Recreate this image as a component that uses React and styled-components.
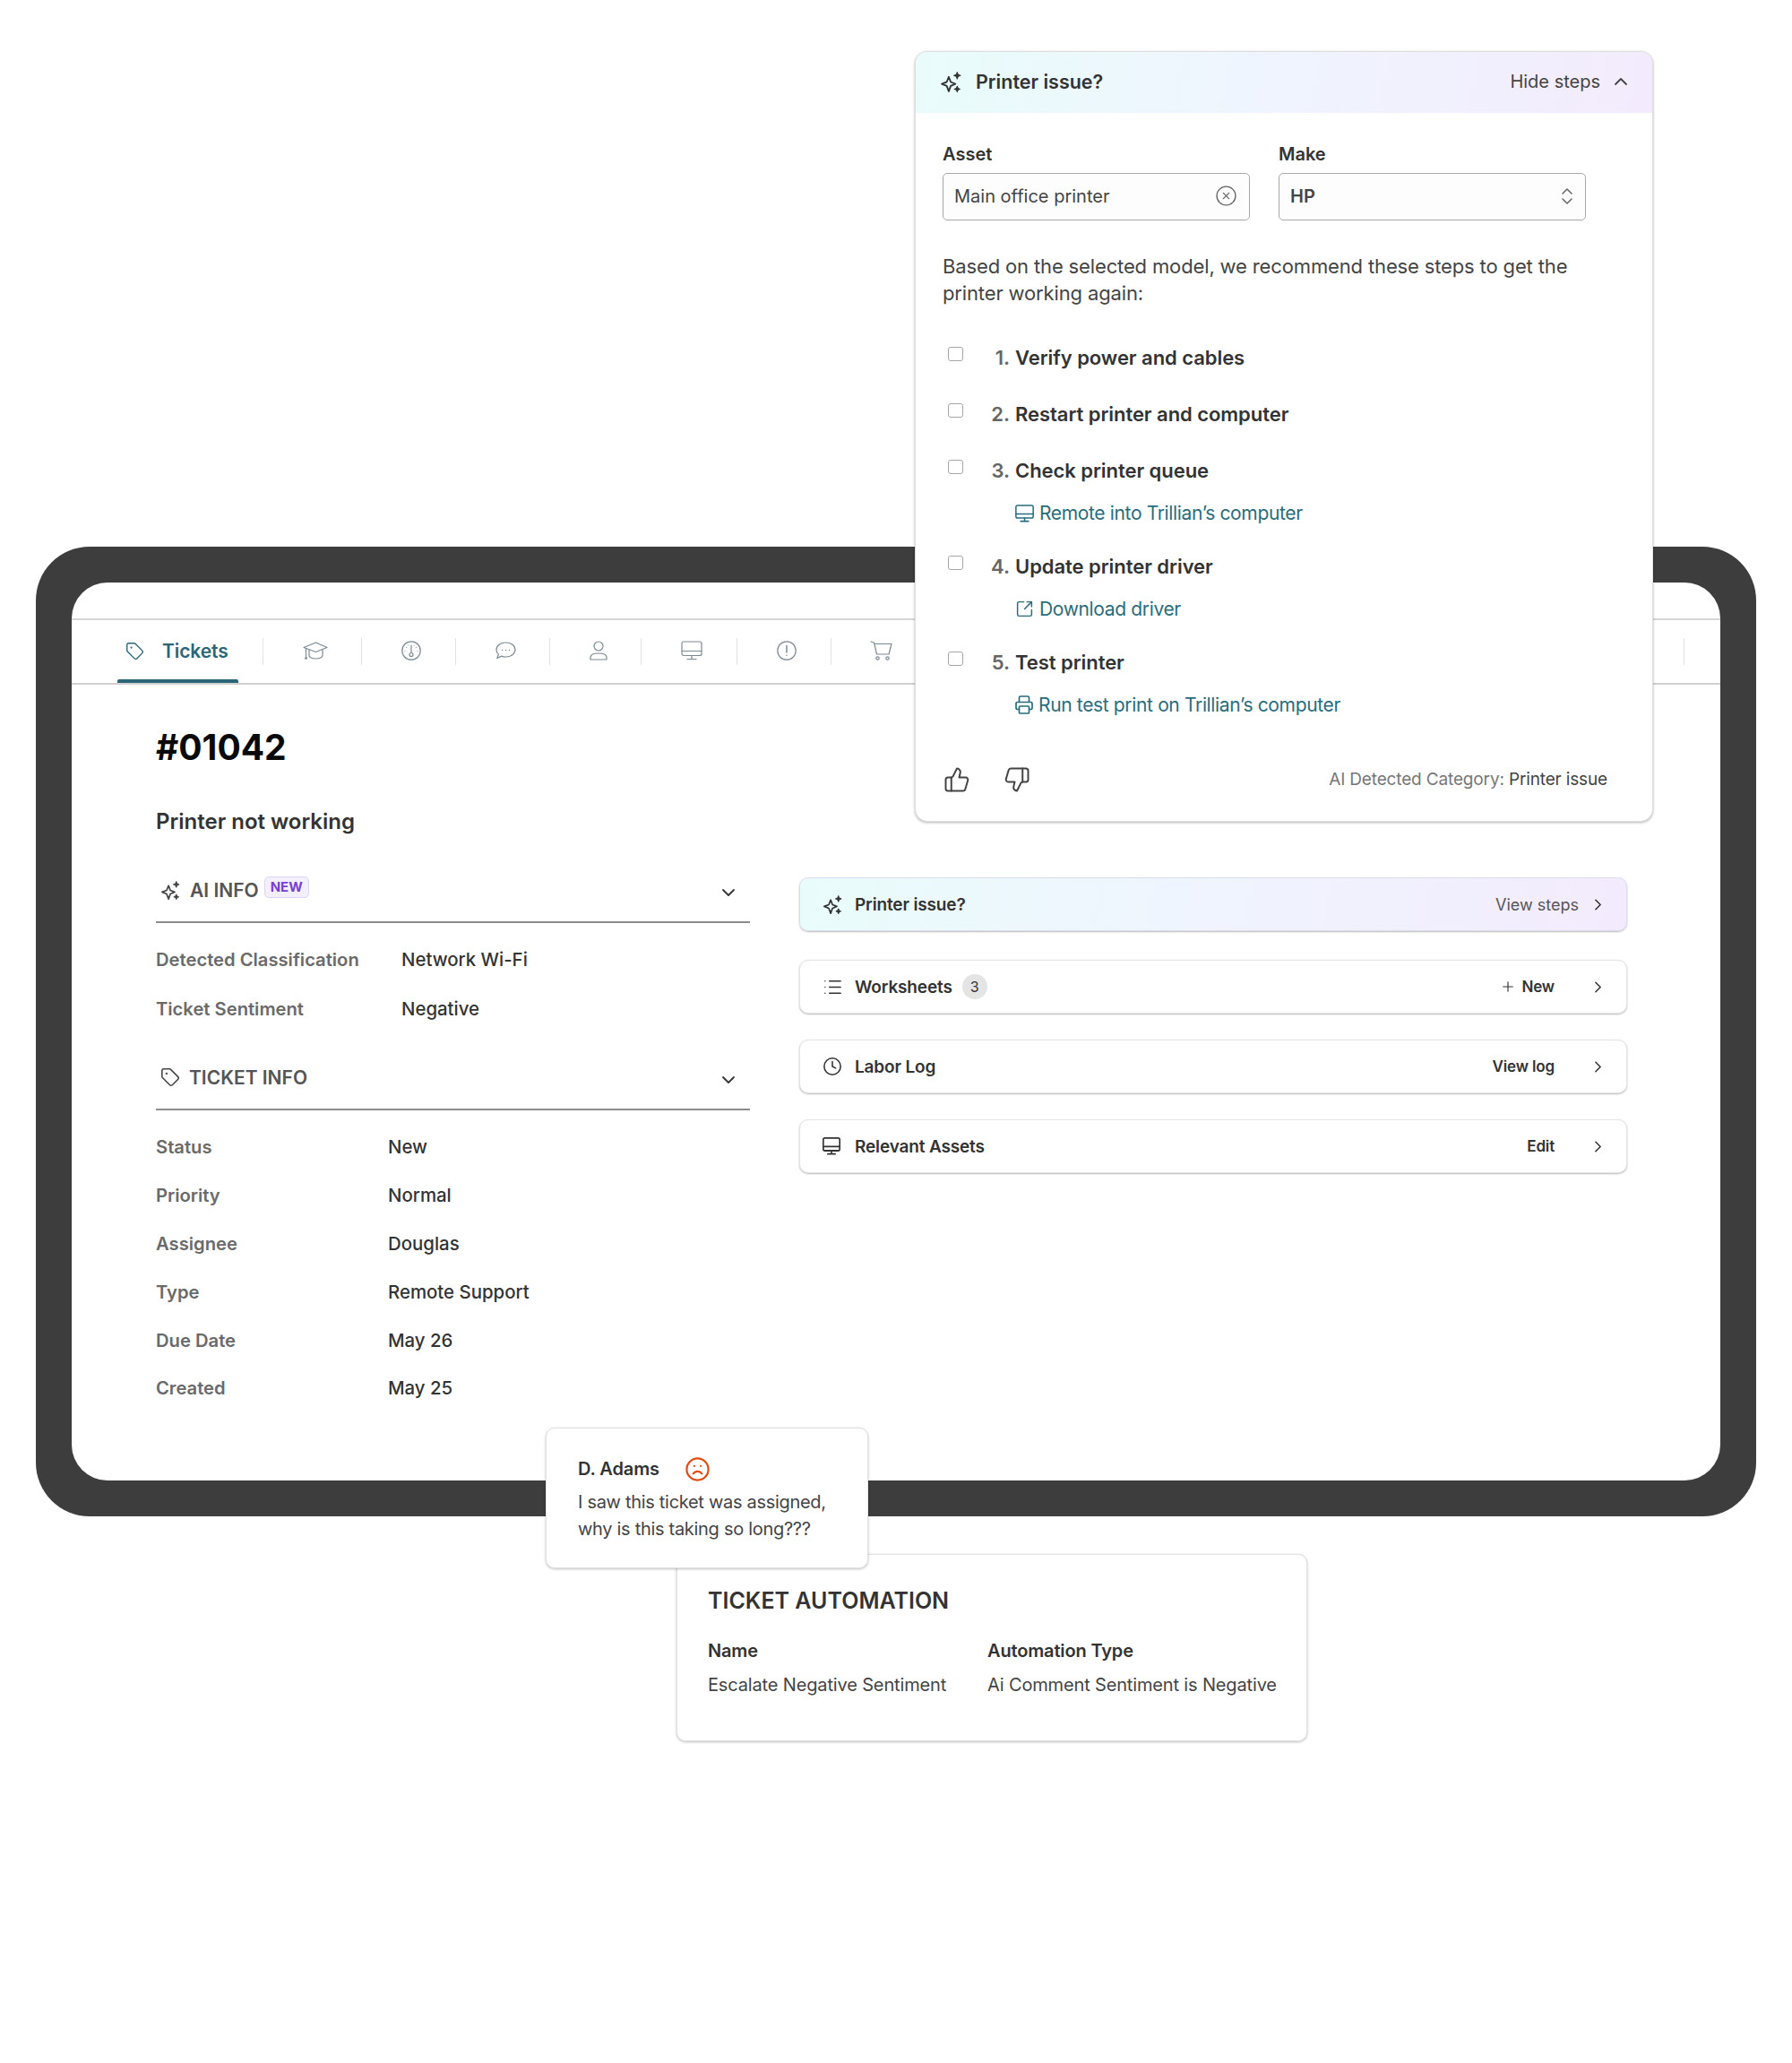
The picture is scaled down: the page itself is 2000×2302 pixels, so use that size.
import { Fragment } from "react";
import styled, { createGlobalStyle } from "styled-components";
import {
  ChevronDown,
  ChevronRight,
  ChevronUp,
  ChevronsUpDown,
  CircleX,
  Clock,
  Frown,
  List,
  Plus,
  SquareArrowOutUpRight,
  Tag,
  ThumbsDown,
  ThumbsUp,
} from "lucide-react";

const GlobalStyle = createGlobalStyle`
  html, body { margin: 0; padding: 0; background: #fff; }
  body { font-family: Inter, "Liberation Sans", sans-serif; color: #333; }
  * { box-sizing: border-box; }
`;

const Sparkle = ({ size = 24 }) => (
  <svg width={size} height={size} viewBox="0 0 24 24" fill="none" stroke="currentColor" strokeWidth="1.8" strokeLinejoin="round">
    <path d="M9.5 6.5 11.6 12l5 2-5 2.2L9.5 22l-2.2-5.8L2 14l5.3-2z" />
    <path d="M18.5 1.5l1 2.6 2.5 1-2.5 1-1 2.6-1-2.6-2.5-1 2.5-1z" fill="currentColor" strokeWidth="1" />
    <path d="M18.5 16.5l.9 2.2 2.1.9-2.1.9-.9 2.2-.9-2.2-2.1-.9 2.1-.9z" fill="currentColor" strokeWidth="1" />
  </svg>
);

const LineIcon = ({ w, h, sw = 1.2, children }) => (
  <svg width={w} height={h} viewBox={`0 0 ${w} ${h}`} fill="none" stroke="currentColor" strokeWidth={sw} strokeLinecap="round" strokeLinejoin="round">
    {children}
  </svg>
);

const CapIcon = () => (
  <LineIcon w={28} h={20}>
    <path d="M1 6.5 14.5 1 27 6.5 14.5 11.5z" />
    <path d="M7 9v6.5c0 2 3.5 3.5 7.5 3.5s7.5-1.5 7.5-3.5V9" />
    <path d="M3.5 7.5v9.500M2.500 19l1-2 1 2z" />
  </LineIcon>
);

const GaugeIcon = () => (
  <LineIcon w={22} h={22}>
    <circle cx="11" cy="11" r="10.2" />
    <circle cx="11" cy="15.5" r="2" />
    <path d="M11 5v8.5M5.5 7.5h.01M16.5 7.5h.01M4 11.5h.01M18 11.5h.01M7.7 5h.01M14.3 5h.01" />
  </LineIcon>
);

const ChatIcon = () => (
  <LineIcon w={23} h={20}>
    <path d="M11.5 1c5.8 0 10.5 3.5 10.5 8s-4.7 8-10.5 8c-1.7 0-3.3-.3-4.700-.9L1.800 18.500l1.600-4.200C1.900 12.900 1 11 1 9c0-4.500 4.700-8 10.500-8z" />
    <path d="M7.5 9.5h.01M11.5 9.5h.01M15.5 9.5h.01" strokeWidth="1.5" />
  </LineIcon>
);

const UserIcon = () => (
  <LineIcon w={20} h={22}>
    <circle cx="10" cy="6" r="5" />
    <path d="M1 21v-2.5C1 15.5 5 14 10 14s9 1.5 9 4.5V21z" />
  </LineIcon>
);

const ScreenIcon = ({ w = 24, h = 22, sw = 1.2 }) => (
  <svg width={w} height={h} viewBox="0 0 24 22" preserveAspectRatio="none" fill="none" stroke="currentColor" strokeWidth={sw} strokeLinecap="round" strokeLinejoin="round">
    <rect x="1" y="1" width="22" height="15.5" rx="2" />
    <path d="M1 11.5h22M12 16.5v4M7 20.5h10" />
  </svg>
);

const AlertIcon = () => (
  <LineIcon w={22} h={22}>
    <circle cx="11" cy="11" r="10.2" />
    <path d="M11 5.5v7.5M11 16.2h.01" strokeWidth="1.5" />
  </LineIcon>
);

const CartIcon = () => (
  <LineIcon w={25} h={22}>
    <path d="M1 1l3.5 1 3 13h13.5L24 3.5H5" />
    <circle cx="8.5" cy="19.5" r="1.7" />
    <circle cx="19.5" cy="19.5" r="1.7" />
  </LineIcon>
);

const PrinterIcon = () => (
  <svg width="20" height="21" viewBox="0 0 20 21" fill="none" stroke="currentColor" strokeWidth="1.7" strokeLinejoin="round">
    <path d="M4.5 7.5V2.5A1.5 1.5 0 0 1 6 1h8a1.5 1.5 0 0 1 1.5 1.5v5" />
    <path d="M4.5 15.5h-2A1.5 1.5 0 0 1 1 14V9a1.5 1.5 0 0 1 1.5-1.5h15A1.5 1.5 0 0 1 19 9v5a1.5 1.5 0 0 1-1.5 1.5h-2" />
    <rect x="4.5" y="12" width="11" height="8" rx="1" />
  </svg>
);

const Canvas = styled.div`
  position: relative;
  width: 2000px;
  height: 2302px;
  padding: 610px 40px 0;
  overflow: hidden;
`;

const Device = styled.div`
  width: 1920px;
  height: 1082px;
  padding: 40px;
  background: #3d3d3d;
  border-radius: 60px;
`;

const Screen = styled.div`
  height: 1002px;
  padding-top: 40px;
  background: #fff;
  border-radius: 40px;
`;

const TabBar = styled.div`
  display: flex;
  align-items: center;
  height: 74px;
  padding-left: 51px;
  padding-right: 40px;
  border-top: 2px solid #d6d6d6;
  border-bottom: 2px solid #d0d0d0;
`;

const ActiveTab = styled.div`
  position: relative;
  display: flex;
  flex: none;
  align-items: center;
  gap: 20px;
  width: 135px;
  height: 70px;
  padding: 0 0 2px 9px;
  font-size: 21px;
  font-weight: 600;
  letter-spacing: -0.1px;
  color: #2a6677;
  &::after {
    content: "";
    position: absolute;
    left: 0;
    right: 0;
    bottom: 0;
    height: 4px;
    border-radius: 2px 2px 0 0;
    background: #2a6677;
  }
`;

const Sep = styled.span`
  flex: none;
  width: 1px;
  height: 30px;
  background: #e2e2e2;
  margin-left: ${(p) => (p.$left === "auto" ? "auto" : `${p.$left || 0}px`)};
`;

const IconTab = styled.div`
  display: flex;
  flex: none;
  align-items: center;
  justify-content: center;
  width: ${(p) => p.$width}px;
  padding: 0 0 2px 6px;
  color: #7a8a94;
`;

const Content = styled.div`
  padding: 46px 104px 0 94px;
`;

const TicketId = styled.h1`
  margin: 0;
  font-size: 39px;
  line-height: 48px;
  font-weight: 700;
  color: #0a0a0a;
`;

const Subject = styled.h2`
  margin: 43px 0 0;
  font-size: 24px;
  line-height: 32px;
  font-weight: 600;
  color: #333;
`;

const Columns = styled.div`
  display: grid;
  grid-template-columns: 663px 924px;
  gap: 55px;
  margin-top: 26px;
`;

const SectionHead = styled.div`
  display: flex;
  align-items: center;
  height: 71px;
  padding: 20px 12px 21px 5px;
  border-bottom: 2px solid #8c8c8c;
  margin-top: ${(p) => p.$top || 0}px;
  color: #444;
`;

const SectionTitle = styled.span`
  margin-left: 10px;
  font-size: 21px;
  font-weight: 600;
  color: #555;
`;

const NewBadge = styled.span`
  align-self: flex-start;
  margin: -1px 0 0 6px;
  padding: 1px 6px;
  font-size: 15px;
  line-height: 20px;
  font-weight: 700;
  color: #7a3fd0;
  background: #f3effd;
  border: 1px solid #ddd5f5;
  border-radius: 5px;
`;

const Chevron = styled.span`
  display: flex;
  margin: 6px 0 0 auto;
  color: #333;
`;

const InfoList = styled.div`
  padding-top: ${(p) => p.$top}px;
`;

const InfoRow = styled.div`
  display: grid;
  grid-template-columns: ${(p) => p.$label}px 1fr;
  align-items: center;
  height: ${(p) => p.$height}px;
`;

const InfoLabel = styled.span`
  font-size: 20.2px;
  font-weight: 600;
  color: #6a6a6a;
`;

const InfoValue = styled.span`
  font-size: 20.4px;
  font-weight: 500;
  color: #333;
`;

const Panels = styled.div`
  display: flex;
  flex-direction: column;
  gap: 29px;
  padding-top: 20px;
`;

const Panel = styled.div`
  display: flex;
  align-items: center;
  height: 60px;
  margin-bottom: ${(p) => (p.$ai ? 3 : 0)}px;
  padding: 0 21px 0 25px;
  border: 1.5px solid ${(p) => (p.$ai ? "#dcdcf0" : "#e4e4e4")};
  border-radius: 10px;
  background: ${(p) =>
    p.$ai ? "linear-gradient(100deg, #e9fcfb 0%, #eff5fe 45%, #f3ebfd 100%)" : "#fff"};
  box-shadow: 0 1px 2px rgba(0, 0, 0, 0.28);
  color: #333;
`;

const PanelIcon = styled.span`
  display: flex;
  flex: none;
  justify-content: flex-start;
  width: 23px;
`;

const PanelTitle = styled.span`
  margin-left: 13px;
  font-size: 19px;
  font-weight: 600;
  letter-spacing: -0.15px;
  color: #333;
`;

const CountBadge = styled.span`
  display: flex;
  align-items: center;
  justify-content: center;
  width: 28px;
  height: 28px;
  margin-left: 11px;
  border-radius: 14px;
  background: #e4e4e4;
  font-size: 16px;
  color: #333;
`;

const PanelAction = styled.span`
  display: flex;
  align-items: center;
  gap: 6px;
  margin-left: auto;
  font-size: ${(p) => (p.$light ? 18 : 17)}px;
  font-weight: ${(p) => (p.$light ? 400 : 600)};
  letter-spacing: ${(p) => (p.$light ? 0 : -0.15)}px;
  color: ${(p) => (p.$light ? "#555" : "#333")};
`;

const PanelChevron = styled.span`
  display: flex;
  margin-left: ${(p) => p.$gap}px;
`;

const Popover = styled.div`
  position: absolute;
  left: 1021px;
  top: 57px;
  width: 824px;
  height: 860px;
  background: #fff;
  border: 1.5px solid #dedede;
  border-radius: 14px;
  box-shadow: 0 1px 3px rgba(0, 0, 0, 0.3);
  overflow: hidden;
`;

const PopHead = styled.div`
  display: flex;
  align-items: center;
  height: 68px;
  padding: 0 23px 2px 27px;
  background: linear-gradient(100deg, #e9fcfb 0%, #eff5fe 45%, #f3ebfd 100%);
`;

const PopTitle = styled.span`
  margin-left: 15px;
  font-size: 21.5px;
  font-weight: 600;
  color: #333;
`;

const PopToggle = styled.span`
  display: flex;
  align-items: center;
  gap: 11px;
  margin-left: auto;
  font-size: 20px;
  color: #444;
`;

const PopBody = styled.div`
  padding: 33px 30px 0;
`;

const Fields = styled.div`
  display: flex;
  gap: 32px;
`;

const Field = styled.div`
  width: 343px;
`;

const FieldLabel = styled.div`
  font-size: 20px;
  line-height: 26px;
  font-weight: 600;
  color: #333;
`;

const FieldBox = styled.div`
  display: flex;
  align-items: center;
  justify-content: space-between;
  height: 53px;
  margin-top: 8px;
  padding: 0 ${(p) => (p.$strong ? 8 : 13)}px 2px 12px;
  border: 1.5px solid #a8a8a8;
  border-radius: 5px;
  background: #fdfdfd;
  font-size: 20px;
  font-weight: ${(p) => (p.$strong ? 600 : 400)};
  color: #444;
`;

const Intro = styled.p`
  margin: 37px 0 0;
  font-size: 22px;
  line-height: 29.5px;
  letter-spacing: -0.14px;
  color: #444;
`;

const Steps = styled.div`
  margin-top: 25.5px;
`;

const Step = styled.div`
  display: flex;
  align-items: center;
  height: 63px;
`;

const CheckBox = styled.span`
  flex: none;
  width: 17px;
  height: 16px;
  margin: -8px 0 0 6px;
  border: 1.5px solid #a6a6a6;
  border-radius: 3px;
  background: #fff;
`;

const StepNum = styled.span`
  flex: none;
  width: 58px;
  text-align: right;
  padding-right: 6px;
  font-size: 22px;
  font-weight: 600;
  color: #666;
`;

const StepName = styled.span`
  font-size: 22px;
  font-weight: 600;
  letter-spacing: -0.05px;
  color: #333;
`;

const StepLink = styled.a`
  display: flex;
  align-items: center;
  gap: 6px;
  height: 44px;
  margin: -6px 0 6px;
  padding-left: 81px;
  font-size: 21px;
  letter-spacing: -0.35px;
  color: #2a6c7c;
`;

const PopFoot = styled.div`
  display: flex;
  align-items: center;
  gap: 37px;
  margin-top: 46px;
  padding-left: 1px;
  color: #444;
`;

const Category = styled.span`
  margin-left: auto;
  padding-right: 20px;
  font-size: 19px;
  letter-spacing: -0.15px;
  color: #777;
  b {
    font-weight: 400;
    color: #444;
  }
`;

const CommentCard = styled.div`
  position: absolute;
  z-index: 2;
  left: 609px;
  top: 1593px;
  width: 360px;
  height: 157px;
  padding: 31px 0 0 35px;
  background: #fff;
  border: 1.5px solid #e2e2e2;
  border-radius: 10px;
  box-shadow: 0 1px 3px rgba(0, 0, 0, 0.25);
`;

const CommentHead = styled.div`
  display: flex;
  align-items: center;
  gap: 28px;
  height: 28px;
  font-size: 20px;
  font-weight: 600;
  letter-spacing: -0.1px;
  color: #333;
  svg {
    color: #e14a10;
  }
`;

const CommentText = styled.p`
  margin: 8px 0 0;
  font-size: 20px;
  line-height: 30px;
  letter-spacing: -0.3px;
  white-space: nowrap;
  color: #444;
`;

const AutomationCard = styled.div`
  position: absolute;
  z-index: 1;
  left: 755px;
  top: 1734px;
  width: 704px;
  height: 209px;
  padding: 33px 0 0 34px;
  background: #fff;
  border: 1.5px solid #e2e2e2;
  border-radius: 10px;
  box-shadow: 0 1px 3px rgba(0, 0, 0, 0.25);
`;

const AutomationTitle = styled.div`
  font-size: 25px;
  line-height: 36px;
  font-weight: 600;
  color: #333;
`;

const AutomationGrid = styled.div`
  display: grid;
  grid-template-columns: 312px 1fr;
  row-gap: 10px;
  margin-top: 24px;
  font-size: 20px;
  line-height: 28px;
  letter-spacing: -0.15px;
  white-space: nowrap;
  color: #444;
`;

const AutomationHead = styled.span`
  font-weight: 600;
  color: #333;
`;

const ticketInfo = [
  ["Status", "New"],
  ["Priority", "Normal"],
  ["Assignee", "Douglas"],
  ["Type", "Remote Support"],
  ["Due Date", "May 26"],
  ["Created", "May 25"],
];

const steps = [
  { num: "1.", name: "Verify power and cables" },
  { num: "2.", name: "Restart printer and computer" },
  { num: "3.", name: "Check printer queue", link: "Remote into Trillian’s computer", icon: <ScreenIcon w={21} h={20} sw={1.7} /> },
  { num: "4.", name: "Update printer driver", link: "Download driver", icon: <SquareArrowOutUpRight size={21} strokeWidth={1.7} /> },
  { num: "5.", name: "Test printer", link: "Run test print on Trillian’s computer", icon: <PrinterIcon /> },
];

const tabIcons = [
  { icon: <CapIcon />, width: 109 },
  { icon: <GaugeIcon />, width: 104 },
  { icon: <ChatIcon />, width: 104 },
  { icon: <UserIcon />, width: 101 },
  { icon: <ScreenIcon />, width: 106 },
  { icon: <AlertIcon />, width: 104 },
  { icon: <CartIcon />, width: 104 },
];

export default function App() {
  return (
    <Canvas>
      <GlobalStyle />
      <Device>
        <Screen>
          <TabBar>
            <ActiveTab>
              <Tag size={21} strokeWidth={1.6} />
              Tickets
            </ActiveTab>
            <Sep $left={27} />
            {tabIcons.map(({ icon, width }, i) => (
              <Fragment key={i}>
                <IconTab $width={width}>{icon}</IconTab>
                <Sep />
              </Fragment>
            ))}
            <Sep $left="auto" />
          </TabBar>
          <Content>
            <TicketId>#01042</TicketId>
            <Subject>Printer not working</Subject>
            <Columns>
              <div>
                <SectionHead>
                  <Sparkle size={23} />
                  <SectionTitle>AI INFO</SectionTitle>
                  <NewBadge>NEW</NewBadge>
                  <Chevron>
                    <ChevronDown size={24} strokeWidth={1.8} />
                  </Chevron>
                </SectionHead>
                <InfoList $top={13}>
                  <InfoRow $label={274} $height={55}>
                    <InfoLabel>Detected Classification</InfoLabel>
                    <InfoValue>Network Wi-Fi</InfoValue>
                  </InfoRow>
                  <InfoRow $label={274} $height={55}>
                    <InfoLabel>Ticket Sentiment</InfoLabel>
                    <InfoValue>Negative</InfoValue>
                  </InfoRow>
                </InfoList>
                <SectionHead $top={15}>
                  <Tag size={22} strokeWidth={1.7} />
                  <SectionTitle>TICKET INFO</SectionTitle>
                  <Chevron>
                    <ChevronDown size={24} strokeWidth={1.8} />
                  </Chevron>
                </SectionHead>
                <InfoList $top={14}>
                  {ticketInfo.map(([label, value]) => (
                    <InfoRow key={label} $label={259} $height={53.8}>
                      <InfoLabel>{label}</InfoLabel>
                      <InfoValue>{value}</InfoValue>
                    </InfoRow>
                  ))}
                </InfoList>
              </div>
              <Panels>
                <Panel $ai>
                  <PanelIcon>
                    <Sparkle size={23} />
                  </PanelIcon>
                  <PanelTitle>Printer issue?</PanelTitle>
                  <PanelAction $light>View steps</PanelAction>
                  <PanelChevron $gap={11}>
                    <ChevronRight size={21} strokeWidth={1.8} />
                  </PanelChevron>
                </Panel>
                <Panel>
                  <PanelIcon>
                    <List size={23} strokeWidth={1.6} />
                  </PanelIcon>
                  <PanelTitle>Worksheets</PanelTitle>
                  <CountBadge>3</CountBadge>
                  <PanelAction>
                    <Plus size={18} strokeWidth={1.5} />
                    New
                  </PanelAction>
                  <PanelChevron $gap={38}>
                    <ChevronRight size={21} strokeWidth={1.8} />
                  </PanelChevron>
                </Panel>
                <Panel>
                  <PanelIcon>
                    <Clock size={22} strokeWidth={1.7} />
                  </PanelIcon>
                  <PanelTitle>Labor Log</PanelTitle>
                  <PanelAction>View log</PanelAction>
                  <PanelChevron $gap={38}>
                    <ChevronRight size={21} strokeWidth={1.8} />
                  </PanelChevron>
                </Panel>
                <Panel>
                  <PanelIcon>
                    <ScreenIcon w={20} h={20} sw={2} />
                  </PanelIcon>
                  <PanelTitle>Relevant Assets</PanelTitle>
                  <PanelAction>Edit</PanelAction>
                  <PanelChevron $gap={38}>
                    <ChevronRight size={21} strokeWidth={1.8} />
                  </PanelChevron>
                </Panel>
              </Panels>
            </Columns>
          </Content>
        </Screen>
      </Device>

      <Popover>
        <PopHead>
          <Sparkle size={25} />
          <PopTitle>Printer issue?</PopTitle>
          <PopToggle>
            Hide steps
            <ChevronUp size={24} strokeWidth={1.8} />
          </PopToggle>
        </PopHead>
        <PopBody>
          <Fields>
            <Field>
              <FieldLabel>Asset</FieldLabel>
              <FieldBox>
                Main office printer
                <CircleX size={25} strokeWidth={1.3} color="#666" />
              </FieldBox>
            </Field>
            <Field>
              <FieldLabel>Make</FieldLabel>
              <FieldBox $strong>
                HP
                <ChevronsUpDown size={24} strokeWidth={1.5} color="#666" />
              </FieldBox>
            </Field>
          </Fields>
          <Intro>
            Based on the selected model, we recommend these steps to get the
            <br />
            printer working again:
          </Intro>
          <Steps>
            {steps.map(({ num, name, link, icon }) => (
              <div key={num}>
                <Step>
                  <CheckBox />
                  <StepNum>{num}</StepNum>
                  <StepName>{name}</StepName>
                </Step>
                {link && (
                  <StepLink>
                    {icon}
                    {link}
                  </StepLink>
                )}
              </div>
            ))}
          </Steps>
          <PopFoot>
            <ThumbsUp size={30} strokeWidth={1.6} />
            <ThumbsDown size={30} strokeWidth={1.6} />
            <Category>
              AI Detected Category: <b>Printer issue</b>
            </Category>
          </PopFoot>
        </PopBody>
      </Popover>

      <CommentCard>
        <CommentHead>
          D. Adams
          <Frown size={29} strokeWidth={1.8} />
        </CommentHead>
        <CommentText>
          I saw this ticket was assigned,
          <br />
          why is this taking so long???
        </CommentText>
      </CommentCard>

      <AutomationCard>
        <AutomationTitle>TICKET AUTOMATION</AutomationTitle>
        <AutomationGrid>
          <AutomationHead>Name</AutomationHead>
          <AutomationHead>Automation Type</AutomationHead>
          <span>Escalate Negative Sentiment</span>
          <span>Ai Comment Sentiment is Negative</span>
        </AutomationGrid>
      </AutomationCard>
    </Canvas>
  );
}
